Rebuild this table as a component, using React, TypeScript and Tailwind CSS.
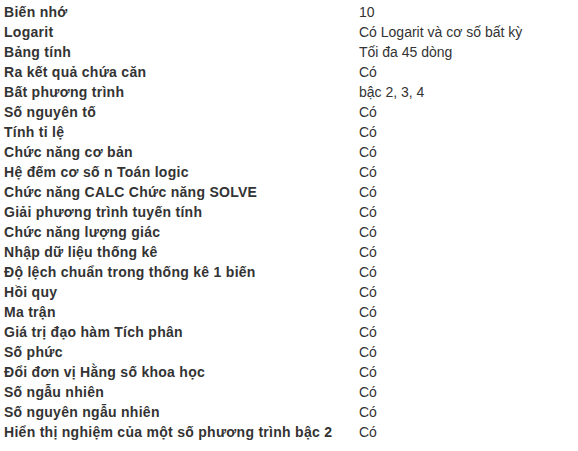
const rows: [string, string][] = [
  ['Biến nhớ', '10'],
  ['Logarit', 'Có Logarit và cơ số bất kỳ'],
  ['Bảng tính', 'Tối đa 45 dòng'],
  ['Ra kết quả chứa căn', 'Có'],
  ['Bất phương trình', 'bậc 2, 3, 4'],
  ['Số nguyên tố', 'Có'],
  ['Tính tỉ lệ', 'Có'],
  ['Chức năng cơ bản', 'Có'],
  ['Hệ đếm cơ số n Toán logic', 'Có'],
  ['Chức năng CALC Chức năng SOLVE', 'Có'],
  ['Giải phương trình tuyến tính', 'Có'],
  ['Chức năng lượng giác', 'Có'],
  ['Nhập dữ liệu thống kê', 'Có'],
  ['Độ lệch chuẩn trong thống kê 1 biến', 'Có'],
  ['Hồi quy', 'Có'],
  ['Ma trận', 'Có'],
  ['Giá trị đạo hàm Tích phân', 'Có'],
  ['Số phức', 'Có'],
  ['Đổi đơn vị Hằng số khoa học', 'Có'],
  ['Số ngẫu nhiên', 'Có'],
  ['Số nguyên ngẫu nhiên', 'Có'],
  ['Hiển thị nghiệm của một số phương trình bậc 2', 'Có'],
];

const App = () => {
  return (
    <main className="min-h-screen bg-white pt-[2px] font-['Liberation_Sans',Arial,sans-serif] text-[14px] text-[#333]">
      {rows.map(([label, value]) => (
        <div key={label} className="grid grid-cols-[359px_1fr] h-5 leading-5">
          <div className="pl-1 font-bold tracking-[0.28px]">{label}</div>
          <div>{value}</div>
        </div>
      ))}
    </main>
  );
};

export default App;
